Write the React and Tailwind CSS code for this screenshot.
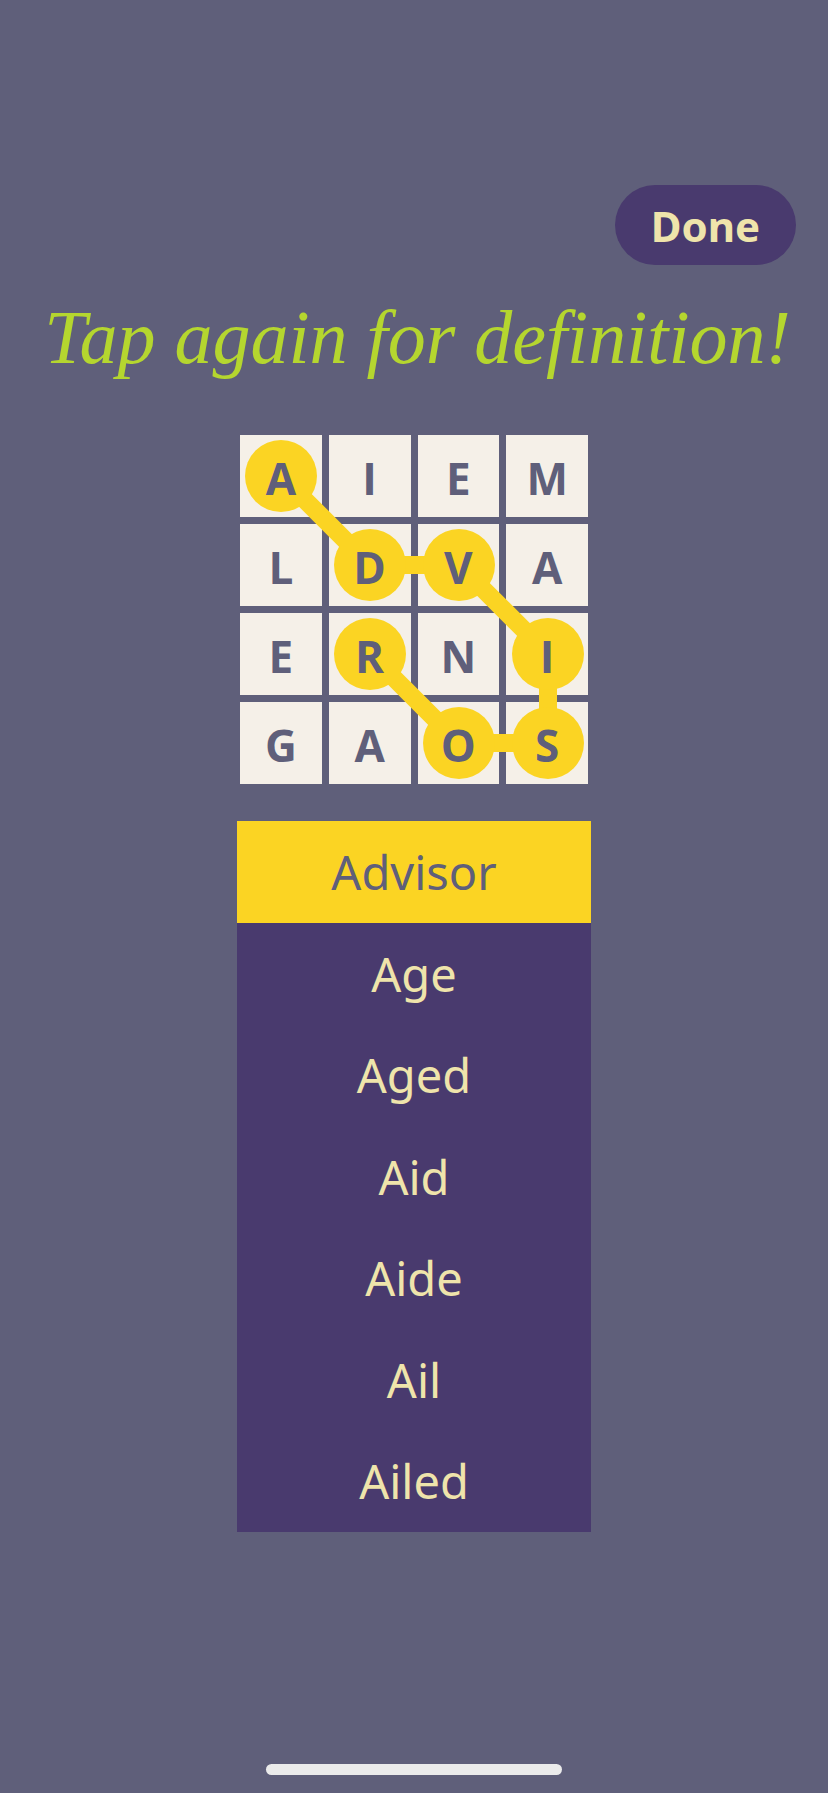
const letters = ['A', 'I', 'E', 'M', 'L', 'D', 'V', 'A', 'E', 'R', 'N', 'I', 'G', 'A', 'O', 'S'];
const words = ['Advisor', 'Age', 'Aged', 'Aid', 'Aide', 'Ail', 'Ailed'];

// centres of the traced letters, in grid pixels
const path = [
  [41, 41],
  [130, 130],
  [219, 130],
  [308, 219],
  [308, 308],
  [219, 308],
  [130, 219],
];

export default function App() {
  return (
    <div className="relative flex h-[1793px] w-[828px] flex-col items-center overflow-hidden bg-[#5f5f7a] font-['Noto_Sans',sans-serif]">
      <div className="flex w-full justify-end pr-[32px] pt-[185px]">
        <button className="flex h-[80px] w-[181px] items-center justify-center rounded-[40px] bg-[#493a6e] text-[42px] font-bold text-[#efe4ab]">
          Done
        </button>
      </div>

      <h1 className="mt-[22px] ml-[7px] whitespace-nowrap font-['Liberation_Serif',serif] text-[76px] leading-[100px] italic text-[#b5d62f]">
        Tap again for definition!
      </h1>

      <div className="relative mt-[48px] grid w-[348px] grid-cols-4 gap-[7px]">
        <svg className="absolute inset-0 z-10" width="348" height="348" viewBox="0 0 348 348">
          <polyline
            points={path.map((p) => p.join(',')).join(' ')}
            fill="none"
            stroke="#fbd423"
            strokeWidth="18"
          />
          {path.map(([x, y]) => (
            <circle key={`${x}-${y}`} cx={x} cy={y} r="36" fill="#fbd423" />
          ))}
        </svg>
        {letters.map((letter, i) => (
          <div key={i} className="flex h-[82px] items-center justify-center bg-[#f5f0e8] pt-[3px]">
            <span className="relative z-20 font-['Open_Sans',sans-serif] text-[44px] leading-none font-bold text-[#5f5f7a]">
              {letter}
            </span>
          </div>
        ))}
      </div>

      <ul className="mt-[37px] w-[354px]">
        {words.map((word, i) => (
          <li
            key={word}
            className={
              i === 0
                ? 'flex h-[102px] items-center justify-center bg-[#fbd423] text-[47px] text-[#5f5f7a]'
                : 'flex h-[101.5px] items-center justify-center bg-[#493a6e] text-[47px] text-[#efe4ab]'
            }
          >
            {word}
          </li>
        ))}
      </ul>

      <div className="absolute bottom-[18px] left-[266px] h-[11px] w-[296px] rounded-full bg-[#ebebeb]" />
    </div>
  );
}
